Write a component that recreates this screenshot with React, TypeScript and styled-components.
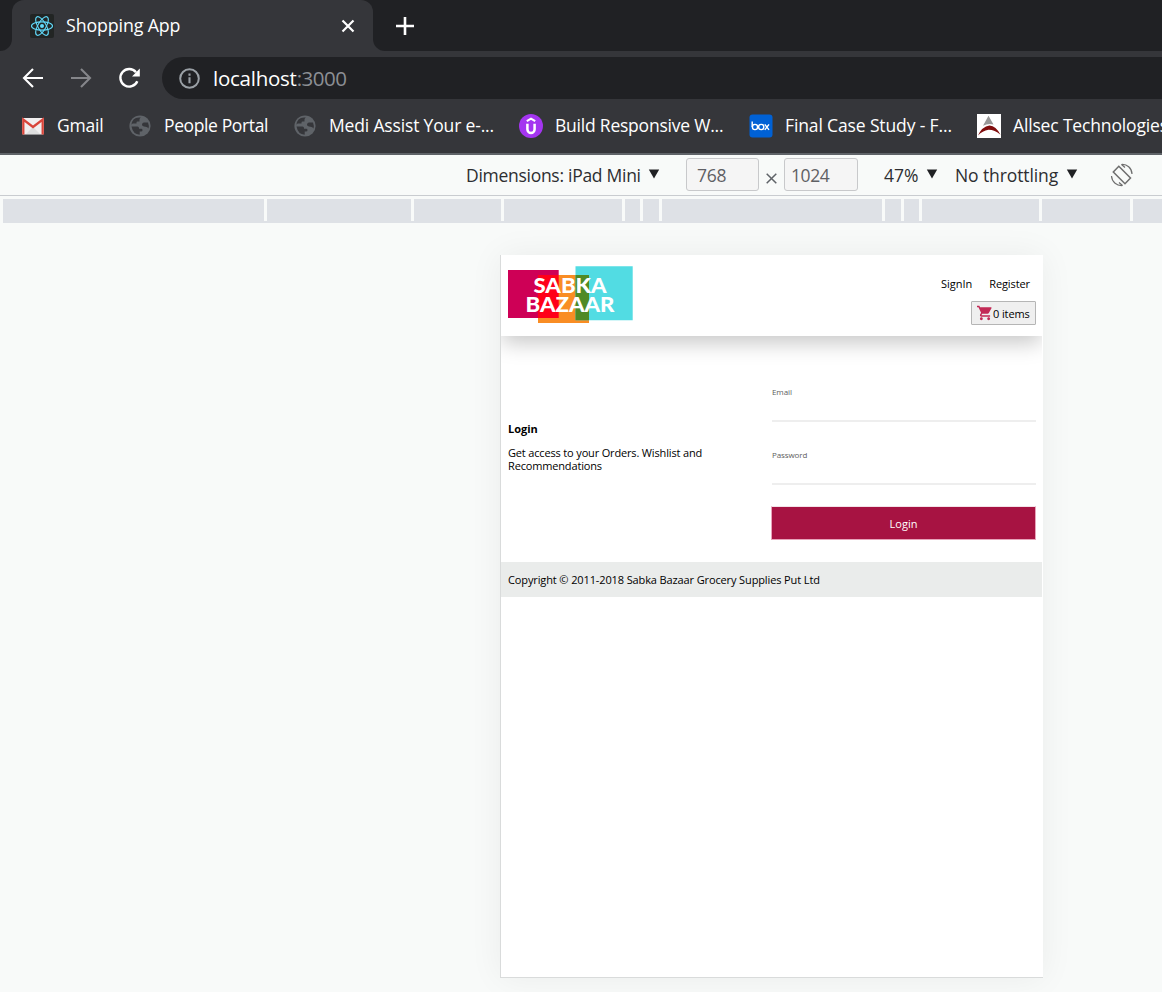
import React from 'react';
import styled, { createGlobalStyle } from 'styled-components';

const GlobalStyle = createGlobalStyle`
  * { box-sizing: border-box; }
  body { margin: 0; overflow: hidden; font-family: "Open Sans", "Noto Sans", sans-serif; background: #f8faf9; }
  svg { display: block; flex: none; }
`;

const Window = styled.div`
  width: 1162px;
  height: 992px;
  overflow: hidden;
  display: flex;
  flex-direction: column;
`;

const Text = styled.span<{ $size?: number; $track?: number; $color?: string }>`
  font-size: ${p => p.$size ?? 17.5}px;
  letter-spacing: ${p => p.$track ?? 0}px;
  color: ${p => p.$color ?? 'inherit'};
  white-space: nowrap;
  line-height: 24px;
`;

/* Browser chrome */
const TabStrip = styled.div`
  height: 51px;
  flex: none;
  display: flex;
  background: #202124;
`;
const TabCurve = styled.div<{ $side: 'left' | 'right' }>`
  width: 12px;
  background: #35363a;
  &::before {
    content: '';
    display: block;
    height: 51px;
    background: #202124;
    border-radius: ${p => (p.$side === 'left' ? '0 0 12px 0' : '0 0 0 12px')};
  }
`;
const Tab = styled.div`
  width: 361px;
  display: flex;
  align-items: center;
  padding: 1px 18px 0;
  color: #fff;
  background: #35363a;
  border-radius: 12px 12px 0 0;
`;
const TabTitle = styled.div`
  flex: 1;
  margin-left: 12px;
  padding-bottom: 2px;
  display: flex;
`;
const NewTab = styled.div`
  display: flex;
  align-items: center;
  margin-left: 11px;
`;
const NavBar = styled.div`
  height: 54px;
  flex: none;
  display: flex;
  align-items: center;
  background: #35363a;
  padding-left: 21px;
`;
const NavIcons = styled.div`
  display: flex;
  gap: 24px;
  width: 141px;
`;
const AddressBar = styled.div`
  flex: 1;
  height: 42px;
  display: flex;
  align-items: center;
  padding-left: 16px;
  background: #202124;
  border-radius: 21px 0 0 21px;
`;
const Url = styled.div`
  margin-left: 12px;
  display: flex;
  color: #fff;
`;
const BookmarkBar = styled.div`
  height: 50px;
  flex: none;
  display: flex;
  align-items: center;
  padding: 0 0 6px 21px;
  background: #35363a;
  border-bottom: 2px solid #5f6368;
  color: #fff;
`;
const Bookmark = styled.div<{ $width: number }>`
  width: ${p => p.$width}px;
  flex: none;
  display: flex;
  align-items: center;
  gap: 12px;
  ${Text} { padding-bottom: 2px; }
`;

/* Device toolbar */
const DeviceBar = styled.div`
  height: 41px;
  flex: none;
  display: flex;
  align-items: center;
  padding-left: 466px;
  border-bottom: 1px solid #c9ccd0;
  color: #2d2e31;
`;
const Select = styled.div<{ $width: number }>`
  width: ${p => p.$width}px;
  display: flex;
  align-items: center;
  justify-content: space-between;
`;
const SizeInput = styled.div<{ $width: number; $pad: number }>`
  width: ${p => p.$width}px;
  height: 33px;
  display: flex;
  align-items: center;
  padding: 1px 0 0 ${p => p.$pad}px;
  margin-top: -1px;
  border: 1px solid #c8c9cb;
  border-radius: 3px;
  background: #f5f5f5;
  color: #5f6064;
`;
const Times = styled.div`
  width: 25px;
  display: flex;
  justify-content: center;
  padding-top: 6px;
`;
const Spacer = styled.div<{ $width: number }>`
  width: ${p => p.$width}px;
  flex: none;
`;
const Ruler = styled.div`
  height: 24px;
  flex: none;
  margin: 3px 0 0 3px;
  display: flex;
  background: #dee1e6;
`;
const RulerStop = styled.div<{ $width: number }>`
  width: ${p => p.$width}px;
  flex: none;
  height: 22px;
  border-right: 3px solid #f8faf9;
`;

/* Emulated page */
const Stage = styled.div`
  flex: 1;
  padding: 32px 0 0 500px;
`;
const Device = styled.div`
  width: 543px;
  height: 723px;
  background: #fff;
  border-left: 1px solid #d9dbdb;
  border-bottom: 1px solid #d9dbdb;
  box-shadow: 0 0 32px rgba(0, 0, 0, 0.06);
  color: #000;
`;
const Header = styled.header`
  height: 81px;
  width: 541px;
  display: flex;
  justify-content: space-between;
  padding: 11px 6px 0 7px;
  box-shadow: 0 8px 20px -1px rgba(0, 0, 0, 0.22);
  clip-path: inset(0 0 -34px 0);
`;
const HeaderSide = styled.div`
  display: flex;
  flex-direction: column;
  align-items: flex-end;
`;
const Links = styled.nav`
  display: flex;
  gap: 17px;
  padding: 6px 6px 0 0;
`;
const Cart = styled.div`
  width: 65px;
  height: 24px;
  margin-top: 5px;
  display: flex;
  align-items: center;
  padding-left: 5px;
  border: 1px solid #b5b5b5;
  border-radius: 1px;
  background: #efefef;
  ${Text} { padding-top: 1px; }
`;
const Main = styled.main`
  height: 226px;
  display: flex;
  padding: 48px 7px 0;
`;
const Intro = styled.section`
  width: 263px;
  padding-top: 38px;
`;
const IntroTitle = styled.h1`
  margin: 0;
  font-size: 11px;
  font-weight: 700;
  line-height: 14px;
`;
const IntroText = styled.p`
  margin: 10px 0 0;
  font-size: 11px;
  line-height: 13px;
  letter-spacing: -0.16px;
`;
const Form = styled.form`
  width: 265px;
`;
const Field = styled.div`
  height: 63px;
`;
const FieldLabel = styled.label`
  display: block;
  height: 38px;
  padding: 2px 0 0;
  margin-left: 1px;
  width: 264px;
  border-bottom: 2px solid #eeeeee;
  font-size: 8px;
  line-height: 11px;
  letter-spacing: -0.1px;
  color: #606060;
`;
const Submit = styled.button`
  display: block;
  width: 265px;
  height: 34px;
  margin: -4px 0 0;
  border: 1px solid #e7a3b9;
  border-top-color: #f3e3e8;
  background: #a71342;
  color: #fff;
  font: 400 11px "Open Sans", sans-serif;
`;
const Footer = styled.footer`
  height: 35px;
  width: 541px;
  display: flex;
  align-items: center;
  padding-left: 7px;
  background: #eaeceb;
`;

const Globe = () => (
  <svg width="24" height="24" viewBox="0 0 24 24">
    <circle cx="12" cy="12" r="10.6" fill="#5f6368" />
    <path d="M3.300 11.300Q3.600 9.500 5 9.500H8.500V8.500Q8.500 7.500 9.500 7.500H11.500V5.500Q11.500 4.500 12.800 3.500Q4 2.500 3.300 11.300ZM3.500 12.500H9.500Q11 12.500 11 14V14.800H13.300Q14.500 14.800 14.500 16.200Q14.500 17.500 13 17.500H11.700V20.700Q5 20.500 3.500 12.500ZM16 8.500H20Q21.300 11.500 20.500 14.500Q19.500 12.800 17.500 12.800Q14 12.500 14 10.500Q14.300 8.500 16 8.500Z" fill="#35363a" />
  </svg>
);

const Caret = () => (
  <svg width="12" height="10" viewBox="0 0 12 10" style={{ marginTop: -3 }}>
    <path d="M0.8 0.5H11.2L6 9.5Z" fill="#202124" />
  </svg>
);

const Logo = () => (
  <svg width="126" height="58" viewBox="0 0 126 58">
    <path d="M0 4H50.7V52H0Z" fill="#ce0056" />
    <path d="M30 9H81V57H30Z" fill="#f98d24" />
    <path d="M67.5 0.3H124.700V54.200H67.5Z" fill="#52dce3" />
    <path d="M30 9H50.7V52H30Z" fill="#ff0019" />
    <path d="M67.5 9H81V54.2H67.5Z" fill="#508a25" />
    <g fill="#fff" fontFamily="Lato, sans-serif" fontWeight="900" fontSize="20.8">
      <text x="25.500" y="27.2" textLength="73" lengthAdjust="spacingAndGlyphs">SABKA</text>
      <text x="17.500" y="46.1" textLength="89" lengthAdjust="spacingAndGlyphs">BAZAAR</text>
    </g>
  </svg>
);

const stops = [264, 147, 90, 121, 18, 19, 223, 19, 18, 120, 91];

export default function App() {
  return (
    <Window>
      <GlobalStyle />
      <TabStrip>
        <TabCurve $side="left" />
        <Tab>
          <svg width="24" height="24" viewBox="0 0 24 24">
            <rect width="24" height="24" rx="2" fill="#222524" />
            <g fill="none" stroke="#61dafb" strokeWidth="1.1">
              <ellipse cx="12" cy="12" rx="10.5" ry="4.1" />
              <ellipse cx="12" cy="12" rx="10.5" ry="4.1" transform="rotate(60 12 12)" />
              <ellipse cx="12" cy="12" rx="10.5" ry="4.1" transform="rotate(120 12 12)" />
            </g>
            <circle cx="12" cy="12" r="2" fill="#61dafb" />
          </svg>
          <TabTitle><Text $size={17.8} $track={-0.12}>Shopping App</Text></TabTitle>
          <svg width="14" height="14" viewBox="0 0 14 14">
            <path d="M1.5 1.5L12.5 12.5M12.5 1.5L1.5 12.5" stroke="#fff" strokeWidth="2.2" />
          </svg>
        </Tab>
        <TabCurve $side="right" />
        <NewTab>
          <svg width="18" height="18" viewBox="0 0 18 18">
            <path d="M9 0V18M0 9H18" stroke="#fff" strokeWidth="2.6" />
          </svg>
        </NewTab>
      </TabStrip>
      <NavBar>
        <NavIcons>
          <svg width="24" height="24" viewBox="0 0 24 24">
            <path d="M22 12H3.5M12 3L3 12L12 21" fill="none" stroke="#fff" strokeWidth="2.1" />
          </svg>
          <svg width="24" height="24" viewBox="0 0 24 24">
            <path d="M2 12H20.5M12 3L21 12L12 21" fill="none" stroke="#85868a" strokeWidth="2.1" />
          </svg>
          <svg width="24" height="24" viewBox="0 0 24 24">
            <path d="M20.3 15.2A8.8 8.8 0 1 1 19 6.2" fill="none" stroke="#fff" strokeWidth="2.4" />
            <path d="M22.8 2.6V10.4H15Z" fill="#fff" />
          </svg>
        </NavIcons>
        <AddressBar>
          <svg width="23" height="23" viewBox="0 0 23 23">
            <circle cx="11.5" cy="11.5" r="9.3" fill="none" stroke="#9aa0a6" strokeWidth="2" />
            <path d="M11.5 10.3V16.3M11.5 6.6V8.7" stroke="#9aa0a6" strokeWidth="2.1" />
          </svg>
          <Url>
            <Text $size={20.5} $track={-0.25}>localhost</Text>
            <Text $size={20.5} $track={-0.5} $color="#8c8f94">:3000</Text>
          </Url>
        </AddressBar>
      </NavBar>
      <BookmarkBar>
        <Bookmark $width={107}>
          <svg width="24" height="24" viewBox="0 0 24 24">
            <rect x="1" y="4" width="22" height="16.5" rx="1.5" fill="#f1efef" />
            <path d="M5 20L12 13L19 20Z" fill="#dedede" />
            <path d="M2.3 20.5V5.5L12 13L21.700 5.5V20.5" fill="none" stroke="#d9453a" strokeWidth="2.3" />
          </svg>
          <Text $track={-0.2}>Gmail</Text>
        </Bookmark>
        <Bookmark $width={165}><Globe /><Text $track={-0.38}>People Portal</Text></Bookmark>
        <Bookmark $width={226}><Globe /><Text $track={-0.16}>Medi Assist Your e-...</Text></Bookmark>
        <Bookmark $width={230}>
          <svg width="24" height="24" viewBox="0 0 24 24">
            <circle cx="12" cy="12" r="12" fill="#a435f0" />
            <path d="M7.8 7.2L12 4.700L16.2 7.2" fill="none" stroke="#fff" strokeWidth="2.1" />
            <path d="M8.4 9.8V15.3A3.6 3.8 0 0 0 15.6 15.3V9.8" fill="none" stroke="#fff" strokeWidth="2.5" />
          </svg>
          <Text $track={-0.22}>Build Responsive W...</Text>
        </Bookmark>
        <Bookmark $width={228}>
          <svg width="24" height="24" viewBox="0 0 24 24">
            <rect x="0.5" y="0.5" width="23" height="23" rx="3" fill="#0061d5" />
            <g fill="none" stroke="#fff" strokeWidth="1.4">
              <path d="M3.2 7.5V13" />
              <circle cx="6" cy="13" r="2.6" />
              <circle cx="12.2" cy="13" r="2.6" />
              <path d="M15.8 10.3L20 15.8M20 10.3L15.8 15.8" />
            </g>
          </svg>
          <Text $track={-0.13}>Final Case Study - F...</Text>
        </Bookmark>
        <Bookmark $width={200}>
          <svg width="24" height="24" viewBox="0 0 24 24">
            <rect width="24" height="24" fill="#fff" />
            <path d="M11.5 1.800L16.5 10.5Q11 9 6 11.8Z" fill="#989898" />
            <path d="M1 21.500Q5 12.500 12.5 11.5Q19 12 23.5 20.8Q17.5 15.700 11.500 15.800Q5.500 16.800 1 21.5Z" fill="#800d0d" />
          </svg>
          <Text $track={-0.16}>Allsec Technologies</Text>
        </Bookmark>
      </BookmarkBar>

      <DeviceBar>
        <Select $width={194}><Text $track={-0.28}>Dimensions: iPad Mini</Text><Caret /></Select>
        <Spacer $width={26} />
        <SizeInput $width={73} $pad={10}><Text $track={-0.3}>768</Text></SizeInput>
        <Times>
          <svg width="11" height="11" viewBox="0 0 11 11">
            <path d="M0.7 0.7L10.3 10.3M10.3 0.7L0.7 10.3" stroke="#5f6368" strokeWidth="1.5" />
          </svg>
        </Times>
        <SizeInput $width={74} $pad={6}><Text $track={-0.4}>1024</Text></SizeInput>
        <Spacer $width={26} />
        <Select $width={54}><Text>47%</Text><Caret /></Select>
        <Spacer $width={17} />
        <Select $width={123}><Text $track={-0.1}>No throttling</Text><Caret /></Select>
        <Spacer $width={32} />
        <svg width="24" height="24" viewBox="0 0 24 24">
          <g fill="none" stroke="#6e6e6e" strokeWidth="1.5">
            <path d="M8.8 3.3L20.5 15L15 20.700L3.300 9Z" />
            <path d="M11.5 1.5C17 1 21.7 5 22 11M12.5 22.5C7 23 1.8 19 1.5 13" strokeWidth="1.2" />
            <path d="M11.5 1.5L15 4.5M12.5 22.5L9 19.5" strokeWidth="1.2" />
          </g>
        </svg>
      </DeviceBar>
      <Ruler>{stops.map((w, i) => <RulerStop key={i} $width={w} />)}</Ruler>

      <Stage>
        <Device>
          <Header>
            <Logo />
            <HeaderSide>
              <Links>
                <Text $size={11}>SignIn</Text>
                <Text $size={11} $track={-0.1}>Register</Text>
              </Links>
              <Cart>
                <svg width="16" height="16" viewBox="1 1 22 22">
                  <path fill="#c22a56" d="M7 18c-1.100 0-1.990.9-1.990 2S5.900 22 7 22s2-.9 2-2-.9-2-2-2zM1 2v2h2l3.600 7.590-1.350 2.450C4.520 15.370 5.480 17 7 17h12v-2H7.420c-.14 0-.25-.11-.25-.25l.03-.12.9-1.630h7.450c.75 0 1.410-.41 1.750-1.030l3.580-6.490C21.250 4.820 20.760 4 20.010 4H5.210l-.94-2H1zm16 16c-1.100 0-1.990.9-1.990 2s.89 2 1.990 2 2-.9 2-2-.9-2-2-2z" />
                </svg>
                <Text $size={11} $track={-0.1}>0 items</Text>
              </Cart>
            </HeaderSide>
          </Header>
          <Main>
            <Intro>
              <IntroTitle>Login</IntroTitle>
              <IntroText>Get access to your Orders. Wishlist and<br />Recommendations</IntroText>
            </Intro>
            <Form>
              <Field><FieldLabel>Email</FieldLabel></Field>
              <Field><FieldLabel>Password</FieldLabel></Field>
              <Submit type="button">Login</Submit>
            </Form>
          </Main>
          <Footer><Text $size={11} $track={-0.12}>Copyright © 2011-2018 Sabka Bazaar Grocery Supplies Put Ltd</Text></Footer>
        </Device>
      </Stage>
    </Window>
  );
}
